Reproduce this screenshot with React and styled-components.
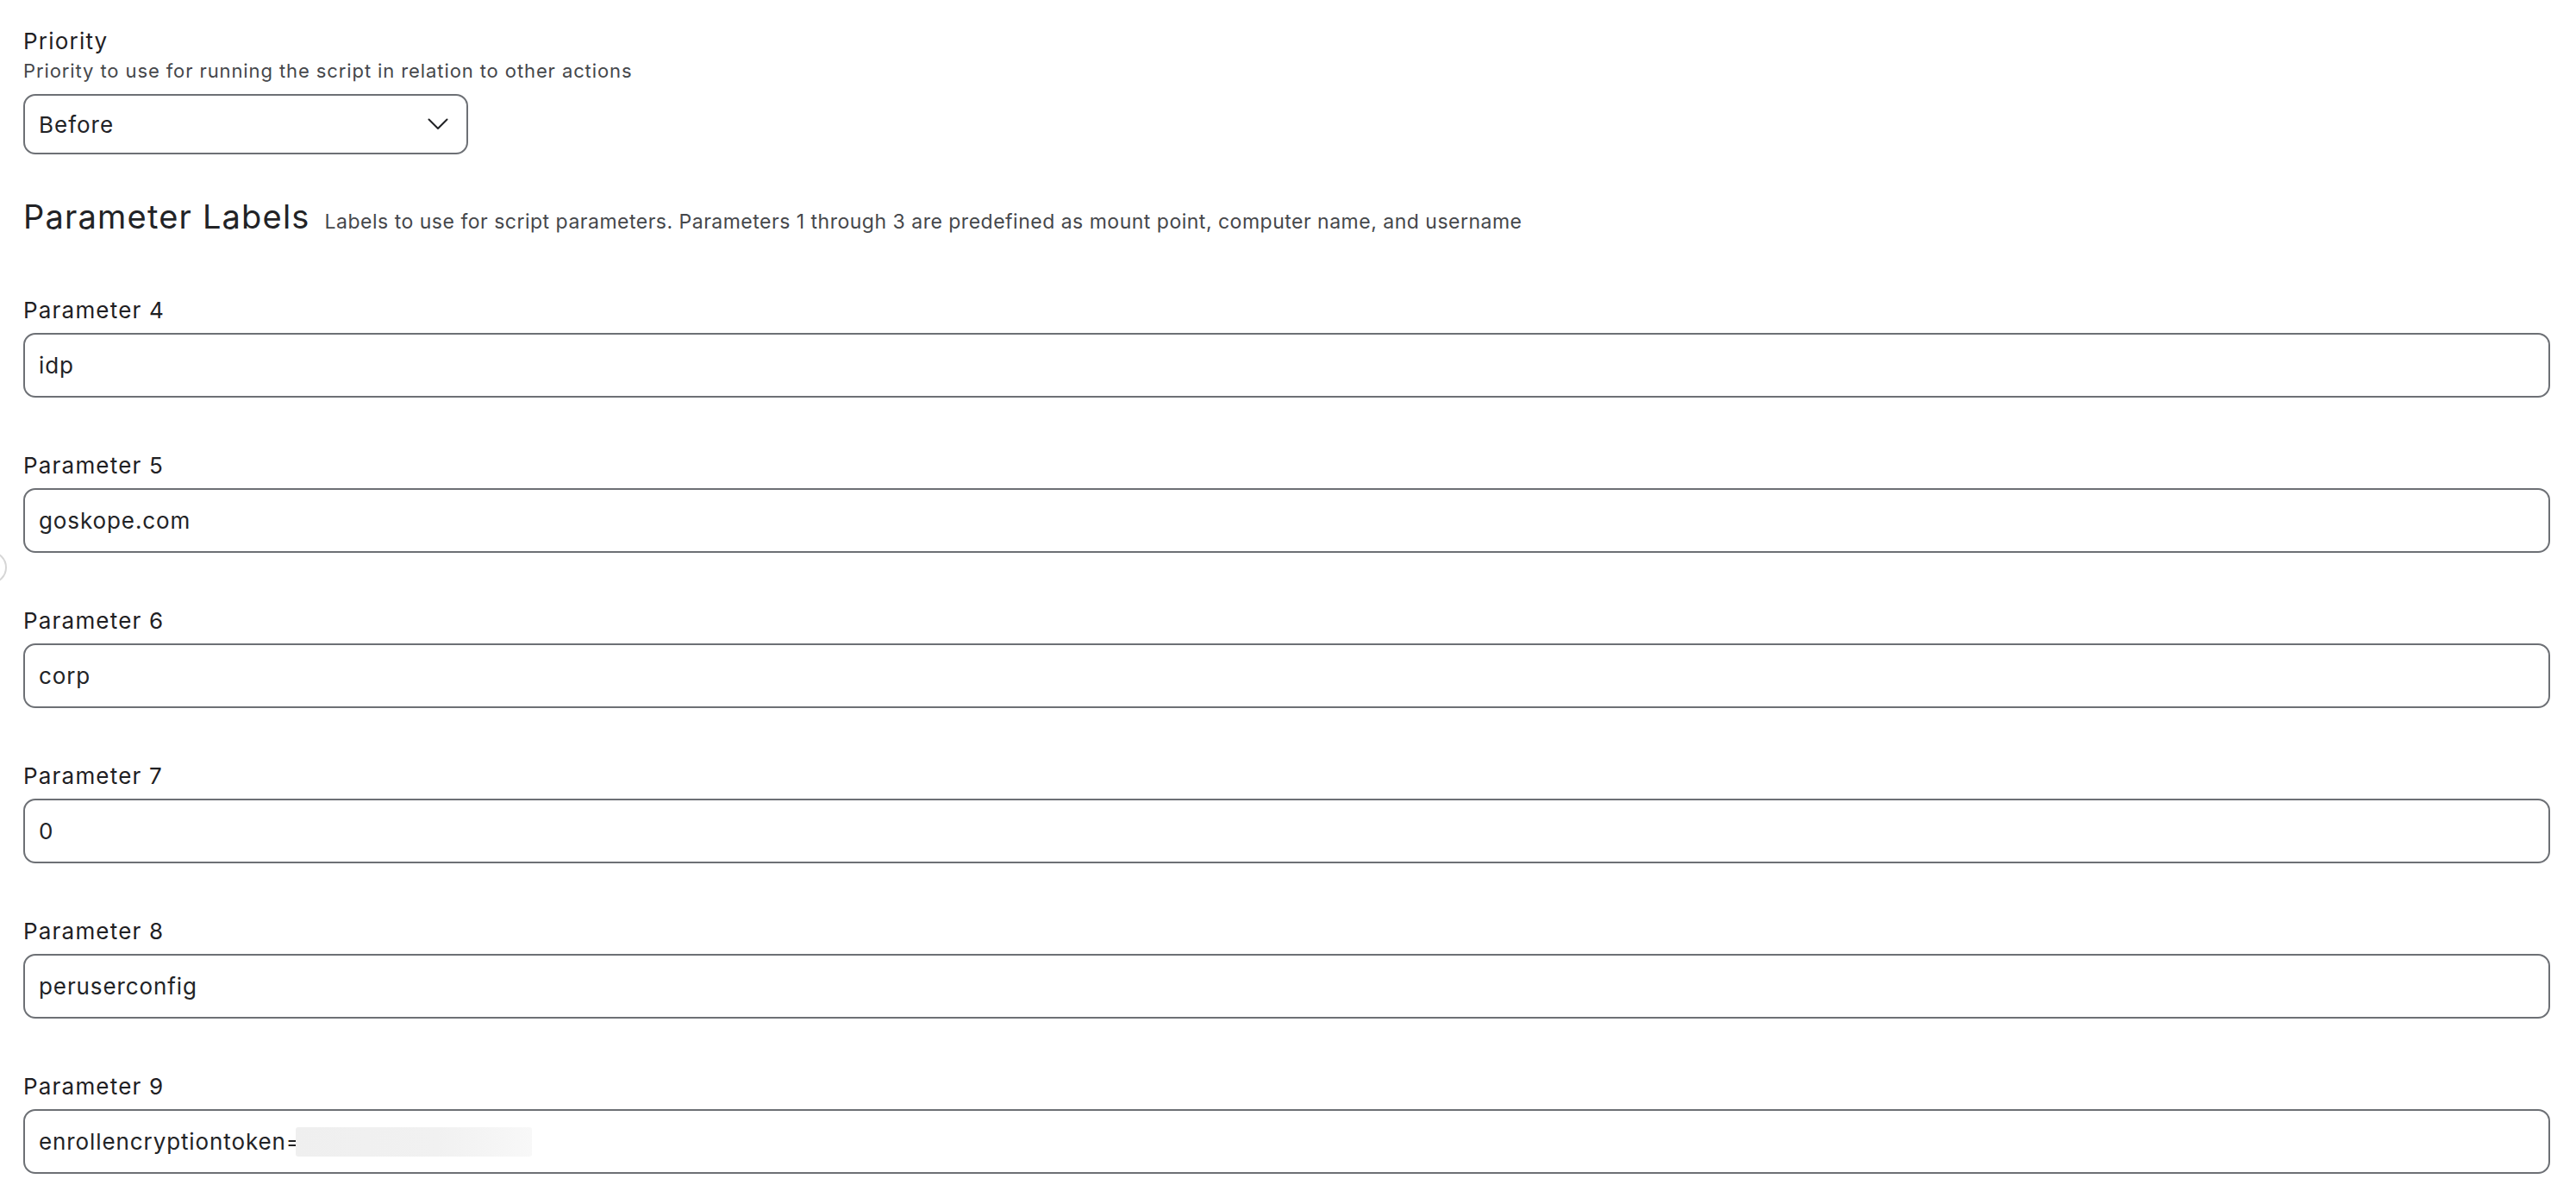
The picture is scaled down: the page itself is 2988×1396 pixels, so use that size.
import React from 'react';
import styled, {createGlobalStyle} from 'styled-components';

const GlobalStyle = createGlobalStyle`
  html, body {
    margin: 0;
    padding: 0;
    background: #fff;
  }
  body {
    font-family: 'Inter', 'Noto Sans', sans-serif;
    color: #222326;
  }
`;

const Page = styled.form`
  position: relative;
  display: flex;
  flex-direction: column;
  padding: 32px 30px 34px 27px;
  min-height: 1396px;
  box-sizing: border-box;
`;

const Field = styled.div`
  display: flex;
  flex-direction: column;
  margin-top: ${p => p.$top || 0}px;
`;

const Label = styled.label`
  font-size: 26px;
  line-height: 32px;
  letter-spacing: 1.2px;
  color: #1f2023;
`;

const Hint = styled.div`
  margin-top: 4px;
  font-size: 22px;
  line-height: 28px;
  letter-spacing: 0.9px;
  color: #45474b;
`;

const SelectBox = styled.div`
  display: flex;
  align-items: center;
  justify-content: space-between;
  margin-top: 13px;
  width: 516px;
  height: 70px;
  box-sizing: border-box;
  padding: 0 21px 0 16px;
  border: 2px solid #6d7075;
  border-radius: 14px;
  font-size: 26px;
  letter-spacing: 1px;
  color: #222326;
  cursor: pointer;
`;

const Section = styled.div`
  display: flex;
  align-items: baseline;
  gap: 17px;
  margin-top: 49px;
`;

const Heading = styled.h2`
  margin: 0;
  font-size: 38px;
  line-height: 46px;
  font-weight: 400;
  letter-spacing: 1.2px;
  color: #222326;
`;

const HeadingHint = styled.span`
  font-size: 23px;
  letter-spacing: 0.5px;
  color: #45474b;
`;

const TextBox = styled.div`
  display: flex;
  align-items: center;
  margin-top: 10px;
  height: 75px;
  box-sizing: border-box;
  padding: 0 16px;
  border: 2px solid #6d7075;
  border-radius: 14px;
  font-size: 26px;
  letter-spacing: 0.9px;
  color: #222326;
`;

// blurred-out secret, laid over the tail of the value
const Redacted = styled.span`
  display: inline-block;
  margin-left: -7px;
  width: 274px;
  height: 34px;
  border-radius: 3px;
  background: linear-gradient(90deg, #efefef 0%, #f1f1f1 60%, #f8f8f8 100%);
`;

// half-hidden round button peeking in at the left edge
const EdgeKnob = styled.div`
  position: absolute;
  left: -30px;
  top: 639px;
  width: 34px;
  height: 34px;
  border: 2px solid #d6d6d6;
  border-radius: 50%;
`;

const Chevron = () => (
  <svg width="24" height="14" viewBox="0 0 24 14" fill="none">
    <polyline points="1.5,1.5 12,12 22.5,1.5" stroke="#222326" strokeWidth="2" strokeLinecap="round" strokeLinejoin="round"/>
  </svg>
);

const params = [
  {n: 4, value: 'idp'},
  {n: 5, value: 'goskope.com'},
  {n: 6, value: 'corp'},
  {n: 7, value: '0'},
  {n: 8, value: 'peruserconfig'},
  {n: 9, value: 'enrollencryptiontoken=', hidden: true},
];

export default function App() {
  return (
    <>
      <GlobalStyle/>
      <Page onSubmit={e => e.preventDefault()}>
        <EdgeKnob/>
        <Field>
          <Label>Priority</Label>
          <Hint>Priority to use for running the script in relation to other actions</Hint>
          <SelectBox>
            <span>Before</span>
            <Chevron/>
          </SelectBox>
        </Field>

        <Section>
          <Heading>Parameter Labels</Heading>
          <HeadingHint>
            Labels to use for script parameters. Parameters 1 through 3 are predefined as mount point, computer name, and username
          </HeadingHint>
        </Section>

        {params.map((p, i) => (
          <Field key={p.n} $top={i === 0 ? 70 : 63}>
            <Label>Parameter {p.n}</Label>
            <TextBox>
              {p.value}
              {p.hidden && <Redacted/>}
            </TextBox>
          </Field>
        ))}
      </Page>
    </>
  );
}
